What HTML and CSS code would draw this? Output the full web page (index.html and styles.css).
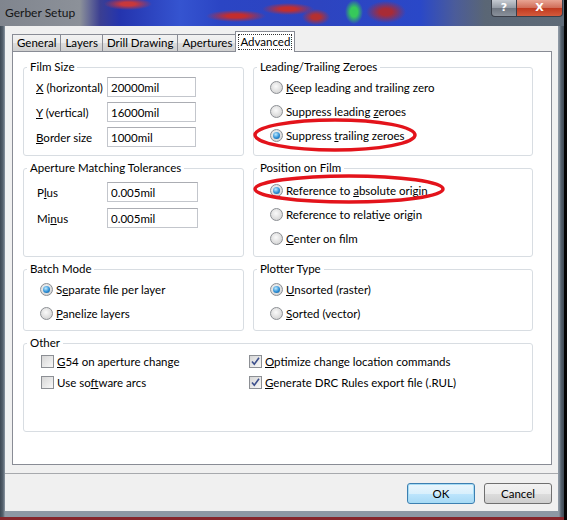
FILE: index.html
```html
<!DOCTYPE html>
<html>
<head>
    <title>Gerber Setup</title>
    <link rel="stylesheet" href="styles.css">
</head>
<body>
<div class="window">
    <div class="titlebar">
        <div class="title">Gerber Setup</div>
        <div class="caption-buttons">
            <div class="cap-btn help">?</div>
            <div class="cap-btn close">X</div>
        </div>
    </div>

    <div class="client">
        <div class="tabs">
            <span class="tab">General</span>
            <span class="tab">Layers</span>
            <span class="tab">Drill Drawing</span>
            <span class="tab">Apertures</span>
            <span class="tab active"><span class="focus">Advanced</span></span>
        </div>

        <div class="page">
            <div class="groups">
                <fieldset class="group">
                    <legend>Film Size</legend>
                    <div class="fields">
                        <div class="field">
                            <label><u>X</u> (horizontal)</label>
                            <input type="text" value="20000mil">
                        </div>
                        <div class="field">
                            <label><u>Y</u> (vertical)</label>
                            <input type="text" value="16000mil">
                        </div>
                        <div class="field">
                            <label><u>B</u>order size</label>
                            <input type="text" value="1000mil">
                        </div>
                    </div>
                </fieldset>

                <fieldset class="group">
                    <legend>Leading/Trailing Zeroes</legend>
                    <div class="options">
                        <div class="option"><span class="radio"></span><span><u>K</u>eep leading and trailing zero</span></div>
                        <div class="option"><span class="radio"></span><span>Suppress leading <u>z</u>eroes</span></div>
                        <div class="option"><span class="radio checked"></span><span>Suppress <u>t</u>railing zeroes</span></div>
                    </div>
                </fieldset>

                <fieldset class="group">
                    <legend>Aperture Matching Tolerances</legend>
                    <div class="fields tolerances">
                        <div class="field">
                            <label>P<u>l</u>us</label>
                            <input type="text" value="0.005mil">
                        </div>
                        <div class="field">
                            <label>Mi<u>n</u>us</label>
                            <input type="text" value="0.005mil">
                        </div>
                    </div>
                </fieldset>

                <fieldset class="group">
                    <legend>Position on Film</legend>
                    <div class="options position">
                        <div class="option"><span class="radio checked"></span><span>Reference to <u>a</u>bsolute origin</span></div>
                        <div class="option"><span class="radio"></span><span>Reference to relati<u>v</u>e origin</span></div>
                        <div class="option"><span class="radio"></span><span><u>C</u>enter on film</span></div>
                    </div>
                </fieldset>

                <fieldset class="group">
                    <legend>Batch Mode</legend>
                    <div class="options">
                        <div class="option"><span class="radio checked"></span><span>S<u>e</u>parate file per layer</span></div>
                        <div class="option"><span class="radio"></span><span><u>P</u>anelize layers</span></div>
                    </div>
                </fieldset>

                <fieldset class="group">
                    <legend>Plotter Type</legend>
                    <div class="options">
                        <div class="option"><span class="radio checked"></span><span><u>U</u>nsorted (raster)</span></div>
                        <div class="option"><span class="radio"></span><span><u>S</u>orted (vector)</span></div>
                    </div>
                </fieldset>

                <fieldset class="group wide">
                    <legend>Other</legend>
                    <div class="checks">
                        <div class="option"><span class="check"></span><span><u>G</u>54 on aperture change</span></div>
                        <div class="option right"><span class="check"><svg width="11" height="11" viewBox="0 0 11 11"><path d="M2 5.5 L4.3 8.3 L9 1.8" fill="none" stroke="#3c4f8c" stroke-width="1.6"/></svg></span><span><u>O</u>ptimize change location commands</span></div>
                        <div class="option"><span class="check"></span><span>Use so<u>f</u>tware arcs</span></div>
                        <div class="option right"><span class="check"><svg width="11" height="11" viewBox="0 0 11 11"><path d="M2 5.5 L4.3 8.3 L9 1.8" fill="none" stroke="#3c4f8c" stroke-width="1.6"/></svg></span><span><u>G</u>enerate DRC Rules export file (.RUL)</span></div>
                    </div>
                </fieldset>
            </div>

            <!-- red marker rings drawn over the two chosen options -->
            <svg class="marks" width="539" height="412">
                <ellipse cx="322" cy="83" rx="80" ry="15" fill="none" stroke="#e3131b" stroke-width="3.5"/>
                <ellipse cx="336" cy="137" rx="94" ry="13" fill="none" stroke="#e3131b" stroke-width="3.5"/>
            </svg>
        </div>

        <div class="footer">
            <button class="btn default">OK</button>
            <button class="btn">Cancel</button>
        </div>
    </div>
</div>
</body>
</html>
```

FILE: styles.css
```css
body {
    margin: 0;
    background: #050505;
    font-family: Lato, "Liberation Sans", sans-serif;
    font-size: 11.5px;
    color: #000;
}

.window {
    width: 564px;
    height: 520px;
    display: flex;
    flex-direction: column;
    box-sizing: border-box;
    border-bottom: 3px solid #86262c;
    background: linear-gradient(90deg, #3d4853 0px, #56626e 3px, #8d98a4 5px, #8d98a4 559px, #56626e 561px, #3d4853 564px);
}

/* glass caption with the blurred board artwork behind it */
.titlebar {
    height: 26px;
    flex: none;
    display: flex;
    justify-content: space-between;
    align-items: flex-start;
    background-color: #2c44c0;
    background-image:
        radial-gradient(9px 12px at 354px 12px, #36c95a 40%, rgba(54,201,90,0)),
        radial-gradient(24px 6px at 128px 4px, #c8383c 30%, rgba(200,56,60,0)),
        radial-gradient(30px 6px at 236px 16px, #c42d2d 30%, rgba(196,45,45,0)),
        radial-gradient(26px 6px at 288px 9px, #c22e2e 30%, rgba(194,46,46,0)),
        radial-gradient(14px 8px at 316px 17px, #b53030 30%, rgba(181,48,48,0)),
        radial-gradient(20px 11px at 386px 12px, #a82b36 30%, rgba(168,43,54,0)),
        linear-gradient(90deg, #80858e 0px, #8c9199 80px, #3b3f92 100px, #2434ae 120px, #3554d0 180px, #2b45c4 220px, #2d44c0 320px, #2a48c8 420px, #4b5c9a 455px, #5a6675 485px, #5f6b78 564px);
}
.title {
    padding: 5px 0 0 5px;
    font-size: 12px;
    line-height: 15px;
    color: #141414;
}
.caption-buttons {
    display: flex;
    margin-right: 1px;
}
.cap-btn {
    height: 17px;
    border: 1px solid #3a3f4a;
    border-top: none;
    box-sizing: border-box;
    color: #fff;
    font: bold 11px "DejaVu Sans", sans-serif;
    text-align: center;
    line-height: 16px;
}
.help {
    width: 26px;
    border-radius: 0 0 0 4px;
    background: linear-gradient(#c5cad1, #939aa4 50%, #6f7681 51%, #8a919b);
}
.close {
    width: 46px;
    border-left: none;
    border-radius: 0 0 4px 0;
    background: linear-gradient(#e8a493, #d06c57 50%, #c0391f 51%, #d35a3c);
}

.client {
    flex: 1;
    margin: 0 6px 6px 5px;
    background: #f0f0f0;
    display: flex;
    flex-direction: column;
}

/* tab strip */
.tabs {
    display: flex;
    align-items: flex-end;
    height: 25px;
    padding-left: 7px;
}
.tab {
    height: 17px;
    padding: 0 4px;
    margin-right: -1px;
    border: 1px solid #898c95;
    border-bottom: none;
    box-sizing: border-box;
    line-height: 16px;
    background: linear-gradient(#f2f2f2, #ebebeb 50%, #dddddd 50%, #cfcfcf);
}
.tab.active {
    position: relative;
    z-index: 1;
    height: 21px;
    margin: 0 -2px -1px -1px;
    padding: 2px 2px 0;
    background: #fff;
}
.focus {
    display: block;
    padding: 0 1px;
    line-height: 14px;
    border: 1px dotted #333;
}

.page {
    position: relative;
    height: 414px;
    margin: 0 6px 0 7px;
    padding: 7px 18px 0 10px;
    background: #fff;
    border: 1px solid #898c95;
    box-sizing: border-box;
}
.groups {
    display: grid;
    grid-template-columns: 221px 280px;
    grid-template-rows: 97px 97px 70px 97px;
    column-gap: 9px;
    row-gap: 4px;
}
.group {
    margin: 0;
    padding: 0;
    min-width: 0;
    border: 1px solid #d8dde2;
    border-radius: 3px;
}
.group.wide {
    grid-column: 1 / 3;
}
legend {
    margin-left: 3px;
    padding: 0 3px;
    line-height: 16px;
}

.fields {
    display: flex;
    flex-direction: column;
    gap: 5px;
    padding: 2px 0 0 12px;
}
.fields.tolerances {
    gap: 6px;
    padding: 6px 0 0 13px;
}
.field {
    display: flex;
    align-items: center;
    height: 20px;
}
.field label {
    width: 71px;
}
.tolerances label {
    width: 70px;
}
.field input {
    width: 89px;
    height: 20px;
    padding: 0 3px;
    box-sizing: border-box;
    border: 1px solid #c3c6cc;
    border-top-color: #abadb3;
    font: inherit;
    color: #000;
}
.tolerances input {
    width: 91px;
}

.options {
    padding-left: 16px;
}
.options.position {
    padding-top: 2px;
}
.option {
    display: flex;
    align-items: center;
    height: 24px;
    white-space: nowrap;
}
.checks {
    display: grid;
    grid-template-columns: 208px 1fr;
    padding-left: 17px;
}
.checks .option {
    height: 21px;
}

.radio {
    position: relative;
    width: 13px;
    height: 13px;
    margin-right: 3px;
    flex: none;
    box-sizing: border-box;
    border: 1px solid #8c8f94;
    border-radius: 50%;
    background: radial-gradient(circle at 45% 40%, #fafafa, #d8d8d8 70%, #c4c4c4);
}
.radio.checked::after {
    content: "";
    position: absolute;
    left: 2px;
    top: 2px;
    width: 7px;
    height: 7px;
    border-radius: 50%;
    background: radial-gradient(circle at 40% 35%, #bfeafd, #2d8fd6 55%, #0f4f86);
}
.check {
    width: 13px;
    height: 13px;
    margin-right: 3px;
    flex: none;
    box-sizing: border-box;
    border: 1px solid #8c8f94;
    background: linear-gradient(135deg, #d6d6d6, #f8f8f8);
    display: flex;
    align-items: center;
    justify-content: center;
}

.marks {
    position: absolute;
    left: 0;
    top: 0;
    pointer-events: none;
}

.footer {
    margin-top: 8px;
    padding: 9px 6px 0 0;
    border-top: 1px solid #a7a9ad;
    display: flex;
    justify-content: flex-end;
    gap: 9px;
}
.btn {
    width: 68px;
    height: 21px;
    padding: 0;
    border: 1px solid #707070;
    border-radius: 3px;
    background: linear-gradient(#f2f2f2, #ebebeb 50%, #dddddd 50%, #cfcfcf);
    font: inherit;
    color: #000;
}
.btn.default {
    border-color: #3c7fb1;
    box-shadow: inset 0 0 0 1px #a6dcf5;
    background: linear-gradient(#eaf6fd, #d9f0fc 50%, #bee6fd 50%, #a7d9f5);
}
```
